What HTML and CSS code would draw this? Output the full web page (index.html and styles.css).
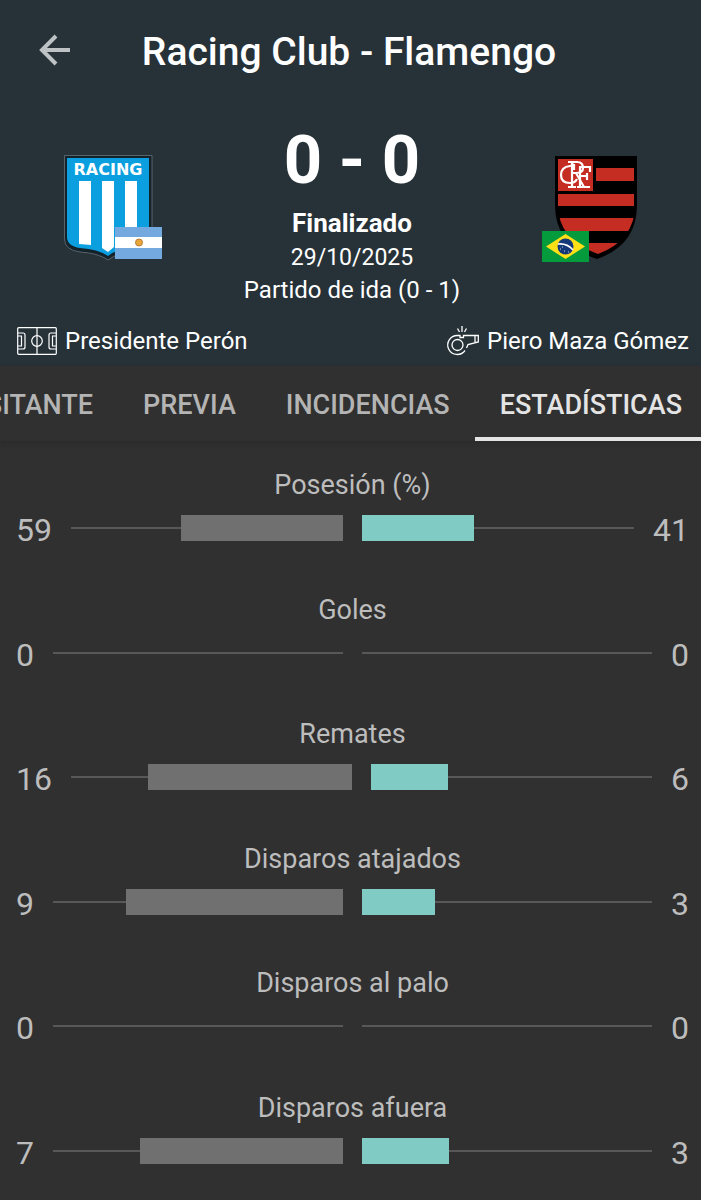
FILE: index.html
```html
<!DOCTYPE html>
<html lang="es">
<head>
<meta charset="utf-8">
<meta name="viewport" content="width=device-width, initial-scale=1">
<title>Racing Club - Flamengo</title>
<link rel="stylesheet" href="styles.css">
</head>
<body>
<header class="match">
  <div class="topbar">
    <button class="back" type="button" aria-label="Volver">
      <svg width="33" height="32" viewBox="0 0 33 32" fill="none" stroke="currentColor" stroke-width="4"><path d="M31 13H3M17 -1L3 13l14 14" transform="translate(0 1)"/></svg>
    </button>
    <h1 class="title">Racing Club - Flamengo</h1>
  </div>
  <div class="scoreboard">
    <svg class="crest" width="99" height="108" viewBox="0 0 99 108" role="img" aria-label="Racing Club, Argentina">
      <path d="M0.500 0.500H88V88Q87 97 74 97Q54 97 44 105Q34 98 16 97Q0.500 95 0.500 84Z" fill="#14222c" stroke="#59636a"/>
      <path d="M3 3H85V84Q83 93 72 93Q54 93 44 101Q34 94 16 93Q3 91 3 82Z" fill="#0b9fe0"/>
      <text class="crest-name" x="44" y="20" text-anchor="middle">RACING</text>
      <path d="M15 26H27V90L15 89ZM38 26H50V92L44 97L38 93ZM61 26H73V88H61Z" fill="#fff"/>
      <path d="M51 72H98V104H51Z" fill="#74a9df"/>
      <path d="M51 82H98V93H51Z" fill="#fff"/>
      <circle cx="75" cy="87.500" r="3.500" fill="#e9a535" stroke="#b97a3a"/>
    </svg>
    <div class="result">
      <p class="score">0 - 0</p>
      <p class="status">Finalizado</p>
      <p class="date">29/10/2025</p>
      <p class="detail">Partido de ida (0 - 1)</p>
    </div>
    <svg class="crest" width="99" height="108" viewBox="0 0 99 108" role="img" aria-label="Flamengo, Brasil">
      <defs><clipPath id="shield"><path d="M17 4H94V50Q94 85 57 99Q17 85 17 50Z"/></clipPath></defs>
      <path d="M14 1H96V50Q96 90 56 104Q14 90 14 50Z" fill="#000"/>
      <g clip-path="url(#shield)" fill="#c52d22">
        <path d="M17 4H52V36H17ZM55 13H93V26H55ZM17 39H93V51H17ZM17 63H93V76H17ZM17 88H93V101H17Z"/>
      </g>
      <g fill="none" stroke="#fff" stroke-width="2.200">
        <path d="M33 9Q31 11 29 11Q20 12 20 20Q20 28 29 28Q34 28 36 24M33 9V15"/>
        <path d="M27 7H36Q42 7 42 13Q42 18 35 18H31M31 7V32M27 32H35M35 18L43 32H49"/>
        <path d="M38 12H49V17M39 12V32M36 32H42M39 21H46M46 18V25"/>
      </g>
      <path d="M1 76H48V107H1Z" fill="#049b3d"/>
      <path d="M5 91.500L24.500 79L44 91.500L24.500 104Z" fill="#ffdf16"/>
      <circle cx="24.500" cy="91.500" r="8" fill="#153878"/>
      <path d="M17 89Q26 88 32 95" fill="none" stroke="#fff" stroke-width="1.500"/>
      <path d="M19 94h1M23 96h1M27 97h1M21 92h1" stroke="#c4d2e8"/>
    </svg>
  </div>
  <div class="facts">
    <p class="fact">
      <svg width="40" height="28" viewBox="0 0 40 28" fill="none" stroke="currentColor" stroke-width="1.200"><rect x="0.700" y="0.700" width="38.600" height="26.600" rx="1"/><path d="M20 1V27M1 6H6Q8 6 8 8V20Q8 22 6 22H1M1 9H4.500V19H1M39 6H34Q32 6 32 8V20Q32 22 34 22H39M39 9H35.500V19H39"/><circle cx="20" cy="14" r="5.300"/></svg>
      <span>Presidente Perón</span>
    </p>
    <p class="fact">
      <svg width="32" height="30" viewBox="0 0 32 30" fill="none" stroke="currentColor" stroke-width="1.300"><circle cx="10.500" cy="19" r="5.500"/><path d="M18 24.500A9.500 9.500 0 1 1 10.500 9.500H13V11.500H16.500V9.500H31.300V16L21 18.500L19.500 22M28 9.500V16.500M10.500 2.500l2 3.500M15 0V6M19.500 2.500L17.500 6"/></svg>
      <span>Piero Maza Gómez</span>
    </p>
  </div>
</header>
<nav class="tabs">
  <a class="tab" href="#visitante">VISITANTE</a>
  <a class="tab" href="#previa">PREVIA</a>
  <a class="tab" href="#incidencias">INCIDENCIAS</a>
  <a class="tab tab-active" href="#estadisticas" aria-current="page">ESTADÍSTICAS</a>
</nav>
<main class="stats" id="estadisticas">
  <section class="stat">
    <h2 class="label">Posesión (%)</h2>
    <div class="row"><span class="value">59</span><div class="track home"><div class="bar" style="width:59.5%"></div></div><div class="track away"><div class="bar" style="width:41%"></div></div><span class="value">41</span></div>
  </section>
  <section class="stat">
    <h2 class="label">Goles</h2>
    <div class="row"><span class="value">0</span><div class="track home"></div><div class="track away"></div><span class="value">0</span></div>
  </section>
  <section class="stat">
    <h2 class="label">Remates</h2>
    <div class="row"><span class="value">16</span><div class="track home"><div class="bar" style="width:72.7%"></div></div><div class="track away"><div class="bar" style="width:27.3%"></div></div><span class="value">6</span></div>
  </section>
  <section class="stat">
    <h2 class="label">Disparos atajados</h2>
    <div class="row"><span class="value">9</span><div class="track home"><div class="bar" style="width:75%"></div></div><div class="track away"><div class="bar" style="width:25%"></div></div><span class="value">3</span></div>
  </section>
  <section class="stat">
    <h2 class="label">Disparos al palo</h2>
    <div class="row"><span class="value">0</span><div class="track home"></div><div class="track away"></div><span class="value">0</span></div>
  </section>
  <section class="stat">
    <h2 class="label">Disparos afuera</h2>
    <div class="row"><span class="value">7</span><div class="track home"><div class="bar" style="width:70%"></div></div><div class="track away"><div class="bar" style="width:30%"></div></div><span class="value">3</span></div>
  </section>
</main>
</body>
</html>
```
FILE: styles.css
```css
* { box-sizing: border-box; }
body {
  margin: 0;
  min-height: 100vh;
  display: flex;
  flex-direction: column;
  background: #303030;
  color: #bdbdbd;
  font-family: Roboto, "Liberation Sans", sans-serif;
}
h1, h2, p { margin: 0; }
svg { display: block; flex: none; overflow: visible; }

.match { background: #263238; color: #fff; }
.topbar {
  display: grid;
  grid-template-columns: 72px 1fr 72px;
  align-items: center;
  padding: 25px 3px 23px 0;
}
.back {
  display: flex;
  justify-content: flex-end;
  margin: 0;
  padding: 0;
  border: 0;
  background: none;
  color: #bec2c4;
}
.title {
  text-align: center;
  font-size: 39px;
  line-height: 54px;
  font-weight: 500;
  white-space: nowrap;
}
.scoreboard {
  display: flex;
  justify-content: space-between;
  align-items: flex-start;
  padding: 22px 61px 0 64px;
}
.crest { margin-top: 31px; }
.crest-name { fill: #fff; font: 700 16px "DejaVu Sans", sans-serif; }
.result { text-align: center; }
.score { font-size: 67px; line-height: 72px; font-weight: 700; }
.status { margin: 12px 0 4px; font-size: 26px; line-height: 30px; font-weight: 700; }
.date { font-size: 23px; line-height: 32px; }
.detail { font-size: 24px; line-height: 32px; }
.facts {
  display: flex;
  justify-content: space-between;
  padding: 16px 12px 6px 17px;
}
.fact {
  display: flex;
  align-items: center;
  gap: 8px;
  font-size: 24px;
  line-height: 38px;
}

.tabs {
  display: flex;
  justify-content: flex-end;
  overflow: hidden;
  height: 75px;
  box-shadow: 0 2px 4px #2a2a2a;
}
.tab {
  flex: none;
  padding: 0 25px;
  border-bottom: 4px solid transparent;
  color: #b4b4b4;
  font-size: 27px;
  line-height: 78px;
  font-weight: 500;
  text-decoration: none;
}
.tab-active { padding-right: 19px; border-color: #e4e4e4; color: #e4e4e4; }

.stats {
  flex: 1;
  display: flex;
  flex-direction: column;
  justify-content: space-between;
  gap: 40px;
  padding: 28px 12px 27px 16px;
}
.label {
  text-align: center;
  font-size: 27px;
  line-height: 32px;
  font-weight: 400;
}
.row { display: flex; align-items: center; gap: 19px; margin-top: 5px; }
.value { padding-top: 4px; font-size: 32px; line-height: 40px; }
.track {
  flex: 1;
  display: flex;
  align-items: center;
  height: 26px;
  background: linear-gradient(#585858, #585858) center / 100% 2px no-repeat;
}
.home { justify-content: flex-end; }
.bar { height: 26px; background: #707070; }
.away .bar { background: #80cbc4; }
```
